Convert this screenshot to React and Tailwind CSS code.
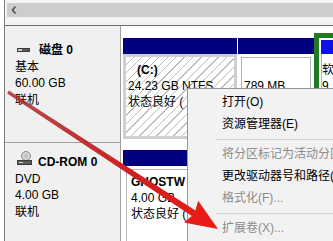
import React from "react";

const DiskIcon = () => (
  <svg width="13" height="6" viewBox="0 0 13 6">
    <rect x="0.5" y="1.5" width="12" height="3" fill="#5c5c5c" stroke="#3a3a3a" />
    <rect x="1" y="2" width="4" height="2" fill="#c4c4c4" />
  </svg>
);

const CdIcon = () => (
  <svg width="15" height="15" viewBox="0 0 15 15">
    <circle cx="9" cy="5" r="4.5" fill="#d6d6d6" stroke="#8a8a8a" />
    <circle cx="9" cy="5" r="1.3" fill="#ffffff" stroke="#777777" strokeWidth="0.6" />
    <rect x="0.5" y="9.5" width="14" height="4" fill="#5e5e5e" stroke="#3c3c3c" />
    <rect x="2" y="11" width="4" height="1" fill="#cfcfcf" />
  </svg>
);

const MenuItem = ({ label, disabled }) => (
  <div className={`flex h-[22px] items-center whitespace-nowrap pl-[34px] ${disabled ? "text-[#8c8c8c]" : "text-black"}`}>
    {label}
  </div>
);

const MenuSep = () => (
  <div className="h-[8px] pt-[4px] pl-[28px]">
    <div className="h-px bg-[#d7d7d7]" />
  </div>
);

export default function App() {
  return (
    <div className="relative h-[241px] w-[333px] overflow-hidden bg-white font-['Liberation_Sans','Noto_Sans_CJK_SC',sans-serif] text-[12px] leading-[16px] text-black">
      <div className="flex h-full">
        <div className="w-[5px] shrink-0 border-r border-[#7d7d7d] bg-white" />
        <div className="flex min-w-0 flex-1 flex-col">
          {/* scroll strip */}
          <div className="h-[26px] shrink-0 border-b border-[#6e6e6e] bg-[#f3f3f3] pt-[3px]">
            <div className="ml-[2px] flex h-[14px] items-center bg-[#cdcdcd] pl-[4px]">
              <svg width="6" height="8" viewBox="0 0 6 8">
                <polyline points="4.5,0.5 1.5,4 4.5,7.5" fill="none" stroke="#505050" strokeWidth="1.6" />
              </svg>
            </div>
          </div>

          {/* disk 0 */}
          <div className="flex h-[117px] shrink-0">
            <div className="w-[116px] shrink-0 border-r border-b border-[#a0a0a0] bg-[#f0f0f0] pl-[10px] pt-[16px] leading-[16.5px]">
              <div className="flex items-center">
                <span className="ml-[2px] mr-[9px] flex"><DiskIcon /></span>
                <span className="font-bold">磁盘 0</span>
              </div>
              <div>基本</div>
              <div>60.00 GB</div>
              <div>联机</div>
            </div>
            <div className="flex min-w-0 flex-1 pl-[2px] pt-[7px] pb-[4px]">
              <div className="mt-[5px] flex w-[114px] shrink-0 flex-col">
                <div className="h-[16px] bg-[#000080]" />
                <div className="flex-1 overflow-hidden whitespace-nowrap border-[3px] border-[#cfcfcf] bg-[repeating-linear-gradient(135deg,#ffffff_0px,#ffffff_5px,#bdbdbd_5px,#bdbdbd_6px)] pl-[2px] pt-[5px]">
                  <div className="ml-[9px] font-bold">(C:)</div>
                  <div>24.23 GB NTFS</div>
                  <div>状态良好 (</div>
                </div>
              </div>
              <div className="ml-[1px] mt-[5px] flex w-[76px] shrink-0 flex-col">
                <div className="h-[16px] bg-[#000080]" />
                <div className="flex-1 bg-white p-[3px]">
                  <div className="h-full overflow-hidden whitespace-nowrap border border-[#b4b4b4] pl-[2px] pt-[4px]">
                    <div>&nbsp;</div>
                    <div>789 MB</div>
                  </div>
                </div>
              </div>
              <div className="min-w-0 flex-1 border-l-[5px] border-t-[5px] border-[#217a21] pl-[2px] pt-[2px]">
                <div className="flex h-full flex-col">
                  <div className="h-[14px] bg-[#1010e8]" />
                  <div className="flex-1 overflow-hidden whitespace-nowrap border-l border-[#b4b4b4] pt-[8px]">
                    <div>软</div>
                    <div>9</div>
                  </div>
                </div>
              </div>
            </div>
          </div>

          {/* CD-ROM 0 */}
          <div className="flex min-h-0 flex-1">
            <div className="w-[116px] shrink-0 border-r border-[#a0a0a0] bg-[#f0f0f0] pl-[10px] pt-[11px] leading-[16.5px]">
              <div className="flex items-center">
                <span className="ml-[2px] mr-[6px] -mt-[8px] flex"><CdIcon /></span>
                <span className="font-bold">CD-ROM 0</span>
              </div>
              <div>DVD</div>
              <div>4.00 GB</div>
              <div>联机</div>
            </div>
            <div className="flex min-w-0 flex-1 flex-col pl-[2px] pr-[2px] pt-[7px]">
              <div className="h-[16px] shrink-0 bg-[#000080]" />
              <div className="flex-1 bg-white p-[3px] pb-0">
                <div className="h-full overflow-hidden whitespace-nowrap border border-b-0 border-[#b4b4b4] pl-[4px] pt-[4px]">
                  <div className="font-bold">GHOSTW</div>
                  <div>4.00 GB</div>
                  <div>状态良好 (</div>
                </div>
              </div>
            </div>
          </div>
        </div>
      </div>

      {/* context menu */}
      <div className="absolute left-[187px] top-[88px] h-[170px] w-[170px] border border-[#979797] bg-[#f2f2f2] pt-[2px]">
        <MenuItem label="打开(O)" />
        <MenuItem label="资源管理器(E)" />
        <MenuSep />
        <MenuItem label="将分区标记为活动分区(M)" disabled />
        <MenuItem label="更改驱动器号和路径(C)..." />
        <MenuItem label="格式化(F)..." disabled />
        <MenuSep />
        <MenuItem label="扩展卷(X)..." disabled />
      </div>

      {/* red arrow */}
      <svg className="pointer-events-none absolute left-0 top-0" width="333" height="241" viewBox="0 0 333 241">
        <defs>
          <linearGradient id="arrowFill" x1="8" y1="92" x2="218" y2="229" gradientUnits="userSpaceOnUse">
            <stop offset="0" stopColor="#a83030" stopOpacity="0.85" />
            <stop offset="0.6" stopColor="#cf2020" />
            <stop offset="1" stopColor="#ee1a14" />
          </linearGradient>
        </defs>
        <polygon
          points="7.2,93.4 191.8,216 184,222.5 218,229 198.2,200.7 195.4,210.4 8.8,90.6"
          fill="url(#arrowFill)"
        />
      </svg>
    </div>
  );
}
